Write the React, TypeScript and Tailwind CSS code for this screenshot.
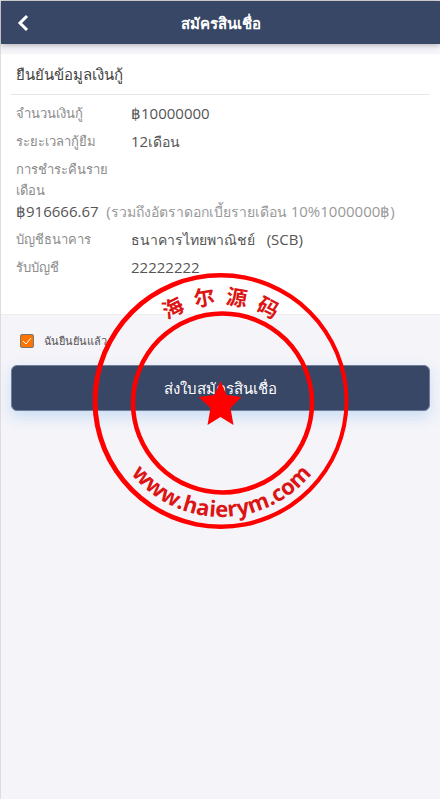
import type { ReactNode } from 'react'

const Header = () => (
  <header className="relative z-10 flex h-[43px] items-center bg-[#384766] shadow-[0_1px_6px_rgba(0,0,0,0.3)]">
    <button type="button" aria-label="ย้อนกลับ" className="flex h-full w-11 items-center justify-center">
      <svg width="12" height="18" viewBox="0 0 12 18" fill="none" stroke="#fff" strokeWidth="3">
        <path d="M10 2 3 9l7 7" />
      </svg>
    </button>
    <h1 className="flex-1 text-center text-[15px] leading-6 font-bold text-white">สมัครสินเชื่อ</h1>
    <div className="w-11" />
  </header>
)

const Row = ({ label, children }: { label: ReactNode; children: ReactNode }) => (
  <div className="mt-[7px] flex flex-wrap leading-[21px]">
    <dt className="w-[115px] text-[13px] leading-[21px] text-[#8c8c8c]">{label}</dt>
    <dd className="text-[#555]">{children}</dd>
  </div>
)

// Thai words run a size smaller than the figures beside them
const Thai = ({ children }: { children: ReactNode }) => (
  <span className="text-sm leading-[21px]">{children}</span>
)

const Stamp = () => (
  <svg
    width="257"
    height="260"
    viewBox="0 0 257 260"
    className="pointer-events-none absolute top-[270px] left-1/2 -translate-x-1/2"
  >
    <defs>
      <path id="stamp-top" d="M31 130a97 97 0 0 1 194 0" />
      <path id="stamp-bottom" d="M13 130a116 116 0 0 0 232 0" />
    </defs>
    {/* the outer ring is slightly heavier on its left side */}
    <path
      fill="#f00"
      fillRule="evenodd"
      d="M0 130a128 128 0 1 0 256 0a128 128 0 1 0 -256 0ZM5 130a123.500 123.500 0 1 0 247 0a123.500 123.500 0 1 0 -247 0Z"
    />
    <circle cx="130" cy="132" r="89.500" fill="none" stroke="#f00" strokeWidth="4.500" />
    <path
      fill="#f00"
      d="M128 110l6 14 15 2-11 11 3 17-13-8-13 8 3-17-12-11 16-2Z"
    />
    <text
      fill="#dc1414"
      textAnchor="middle"
      className="font-['Noto_Sans_CJK_SC',sans-serif] text-[21px] font-bold whitespace-pre"
    >
      <textPath href="#stamp-top" startOffset="50%">
        {'海\u00a0\u00a0尔\u00a0\u00a0源\u00a0\u00a0码'}
      </textPath>
    </text>
    <text
      fill="#dc1414"
      textAnchor="middle"
      className="font-['Open_Sans',sans-serif] text-[22px] font-bold"
    >
      <textPath href="#stamp-bottom" startOffset="50%">
        www.haierym.com
      </textPath>
    </text>
  </svg>
)

export default function App() {
  return (
    <div className="relative min-h-screen border-t border-l border-[#ddd] bg-[#f4f4f9] font-['Open_Sans','Noto_Sans',sans-serif] text-[15px]">
      <Header />
      <main>
        <section className="mt-[10px] border-b border-[#eee] bg-white px-[10px] pb-9">
          <h2 className="border-b border-[#e8e8e8] px-[5px] py-[10px] text-[15px] leading-5 text-[#444]">
            ยืนยันข้อมูลเงินกู้
          </h2>
          <dl className="px-[5px] pt-px">
            <Row label="จำนวนเงินกู้">฿10000000</Row>
            <Row label="ระยะเวลากู้ยืม">
              12<Thai>เดือน</Thai>
            </Row>
            <Row
              label={
                <>
                  การชำระคืนราย
                  <br />
                  เดือน
                </>
              }
            >
              ฿916666.67&nbsp;&nbsp;
              <span className="text-[#999]">
                (<Thai>รวมถึงอัตราดอกเบี้ยรายเดือน</Thai> 10%1000000฿)
              </span>
            </Row>
            <Row label="บัญชีธนาคาร">
              <Thai>ธนาคารไทยพาณิชย์</Thai> &nbsp; (SCB)
            </Row>
            <Row label="รับบัญชี">22222222</Row>
          </dl>
        </section>
        <form className="px-[10px]" onSubmit={(e) => e.preventDefault()}>
          <label className="flex items-center gap-[10px] px-[9px] pt-4 pb-[14px] text-[11px] leading-5 text-[#555]">
            <span className="grid">
              <input
                type="checkbox"
                defaultChecked
                className="peer col-start-1 row-start-1 size-[14px] appearance-none rounded-xs border border-[#777] bg-white checked:bg-[#ff7300]"
              />
              <svg
                width="14"
                height="14"
                viewBox="0 0 14 14"
                fill="none"
                stroke="#fff"
                className="pointer-events-none invisible col-start-1 row-start-1 peer-checked:visible"
              >
                <path d="m3 7 3 3 5-6" />
              </svg>
            </span>
            ฉันยืนยันแล้ว
          </label>
          <button
            type="submit"
            className="h-[46px] w-full rounded-md border border-[#6f7d98] bg-[#384766] text-[15px] text-white shadow-[0_6px_14px_rgba(150,195,240,0.45)]"
          >
            ส่งใบสมัครสินเชื่อ
          </button>
        </form>
      </main>
      <Stamp />
    </div>
  )
}
